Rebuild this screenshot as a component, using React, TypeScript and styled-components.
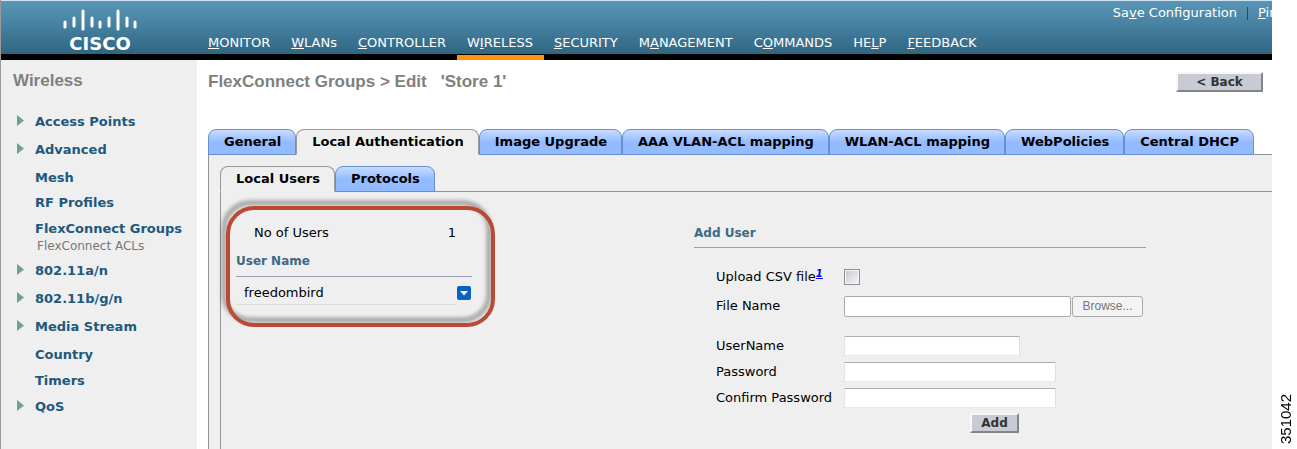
import React, { useState } from "react";
import styled, { createGlobalStyle, css } from "styled-components";

const sans = `"DejaVu Sans", Verdana, sans-serif`;
const arial = `"Liberation Sans", Arial, sans-serif`;

const GlobalStyle = createGlobalStyle`
  *, *::before, *::after { box-sizing: border-box; }
  body { margin: 0; background: #fff; color: #000; font: 13px/16px ${sans}; }
  button, input { font: inherit; }
`;

const Page = styled.div`
  display: flex;
  min-height: 100vh;
`;

const AppFrame = styled.div`
  flex: 1;
  min-width: 0;
  display: flex;
  flex-direction: column;
  border-left: 1px solid #999;
`;

const FigureNumber = styled.aside`
  width: 25px;
  padding: 5px;
  font: 15px/18px ${arial};
  writing-mode: vertical-rl;
  transform: rotate(180deg);
`;

/* ---------- Header ---------- */

const Header = styled.header`
  display: flex;
  height: 60px;
  border-top: 1px solid #cfe3f2;
  background: linear-gradient(#5a95b5, #4d89a9 30%, #2f6682) top / 100% 53px no-repeat #000;
`;

const Logo = styled.svg`
  flex: none;
  width: 207px;
  height: 53px;
`;

const HeaderBody = styled.div`
  flex: 1;
  min-width: 0;
  display: flex;
  flex-direction: column;
  justify-content: space-between;
`;

const UtilityNav = styled.nav`
  display: flex;
  justify-content: flex-end;
  padding-top: 4px;
`;

const UtilityLink = styled.a<{ $clipped?: boolean }>`
  color: #fff;
  text-decoration: none;
  ${(p) => p.$clipped && css`
    width: 14px;
    overflow: hidden;
  `}
`;

const Divider = styled.span`
  width: 1px;
  height: 13px;
  margin: 2px 10px 0;
  background: #1f4a7a;
`;

const MainNav = styled.nav`
  display: flex;
  margin-left: -10px;
`;

const NavLink = styled.a<{ $active?: boolean }>`
  height: 25px;
  padding: 0 11px 0 10px;
  border-bottom: 5px solid ${(p) => (p.$active ? "#ff9310" : "transparent")};
  color: #fff;
  text-decoration: none;
`;

/* ---------- Sidebar ---------- */

const Columns = styled.div`
  flex: 1;
  display: flex;
`;

const Sidebar = styled.aside`
  flex: none;
  width: 196px;
  padding: 11px 12px;
  background: #efefef;
`;

const Heading = styled.h1`
  margin: 0;
  color: #808080;
  font: bold 17px/20px ${arial};
  white-space: pre;
`;

const SideList = styled.ul`
  margin: 22px 0 0;
  padding: 0;
  list-style: none;
`;

const SideItem = styled.li<{ $height: number }>`
  display: flex;
  height: ${(p) => p.$height}px;
`;

const Marker = styled.span`
  flex: none;
  width: 22px;
  padding: 2px 4px;
`;

const Triangle = styled.svg`
  display: block;
  width: 7px;
  height: 11px;
  fill: #6ba09b;
`;

const SideLink = styled.a<{ $sub?: boolean }>`
  color: #20597d;
  font-weight: bold;
  line-height: 18px;
  text-decoration: none;
  white-space: nowrap;
  ${(p) => p.$sub && css`
    padding-left: 2px;
    color: #777;
    font-size: 12px;
    font-weight: normal;
    line-height: 16px;
  `}
`;

/* ---------- Main ---------- */

const Main = styled.main`
  flex: 1;
  min-width: 0;
  display: flex;
  flex-direction: column;
  padding-left: 11px;
`;

const TitleBar = styled.div`
  display: flex;
  justify-content: space-between;
  height: 69px;
  padding: 12px 9px 0 0;
`;

const TitleText = styled.div`
  display: flex;
  gap: 14px;
`;

const GreyButton = styled.button<{ $width: number }>`
  width: ${(p) => p.$width}px;
  height: 20px;
  padding: 0;
  border: 2px solid;
  border-color: #f8f8f8 #858588 #858588 #f8f8f8;
  background: #c8cbd4;
  color: #333;
  font-size: 12px;
  font-weight: bold;
  line-height: 16px;
`;

const TabList = styled.div`
  display: flex;
  margin-bottom: -1px;
`;

const Tab = styled.button<{ $active?: boolean }>`
  position: relative;
  height: 26px;
  padding: 0 14px 0 15px;
  border: 1px solid #6890cc;
  border-radius: 8px 8px 0 0;
  background: linear-gradient(#c6dbff, #a5c6ff 35%, #93bbff 50%, #93bbff);
  font-weight: bold;
  white-space: nowrap;
  ${(p) => p.$active && css`
    border-color: #999;
    border-bottom-color: #efefef;
    background: #efefef;
  `}
`;

const Panel = styled.div`
  flex: 1;
  display: flex;
  flex-direction: column;
  padding: 11px 0 0 11px;
  border: 1px solid #8f9496;
  border-width: 1px 0 0 1px;
  background: #efefef;
`;

const InnerPanel = styled.div`
  flex: 1;
  display: grid;
  grid-template-columns: 458fr 578fr;
  align-items: start;
  padding: 33px 0 15px 15px;
  border: 1px solid #8f9496;
  border-width: 1px 0 0 1px;
`;

const Users = styled.section`
  position: relative;
  width: 236px;
`;

const Callout = styled.div`
  position: absolute;
  inset: -19px -23px -22px -10px;
  border: 4px solid #b94a35;
  border-radius: 28px;
  filter: drop-shadow(-4px -5px 2px rgba(0, 0, 0, 0.4));
  pointer-events: none;
`;

const CountRow = styled.div`
  display: flex;
  justify-content: space-between;
  padding: 0 16px 0 18px;
`;

const UserTable = styled.table`
  width: 100%;
  margin-top: 12px;
  border-collapse: collapse;
`;

const UserHead = styled.th`
  height: 23px;
  padding: 0 0 6px;
  border-bottom: 1px solid #9a9db5;
  color: #3b6a85;
  font-size: 12px;
  text-align: left;
`;

const UserCell = styled.td`
  height: 28px;
  padding: 6px 0 0 8px;
  border-bottom: 1px solid #ddd;
`;

const MenuCell = styled.td`
  width: 15px;
  padding: 6px 0 0;
`;

const MenuButton = styled.button`
  display: block;
  width: 14px;
  height: 14px;
  padding: 0;
  border: 0;
  border-radius: 2px;
  background: #0a63c4;
`;

const AddForm = styled.form`
  width: 452px;
`;

const FormTitle = styled.h2`
  margin: 0;
  height: 23px;
  border-bottom: 1px solid #9a9db5;
  color: #3b6a85;
  font-size: 12px;
  line-height: 16px;
`;

const Field = styled.div<{ $gap?: number }>`
  display: flex;
  align-items: center;
  height: 22px;
  margin-top: ${(p) => p.$gap ?? 4}px;
  padding-left: 22px;
`;

const Label = styled.label`
  flex: none;
  width: 128px;
  white-space: nowrap;
`;

const Footnote = styled.a`
  color: #00f;
  font-size: 10px;
  font-style: italic;
  font-weight: bold;
  line-height: 8px;
  vertical-align: 4px;
`;

const Checkbox = styled.input`
  appearance: none;
  width: 16px;
  height: 16px;
  margin: 0;
  border: 1px solid #8e8f8f;
  outline: 1px solid #f4f4f4;
  outline-offset: -2px;
  background: linear-gradient(135deg, #c4c9d0, #f6f6f6);
`;

const TextInput = styled.input<{ $width: number }>`
  width: ${(p) => p.$width}px;
  height: 20px;
  padding: 0 4px;
  border: 1px solid;
  border-color: #abadb3 #dbdfe6 #e3e9ef #e2e3ea;
  border-radius: 1px;
  background: #fff;
`;

const FileInput = styled(TextInput)`
  height: 21px;
  border-color: #aaa;
  border-radius: 2px;
`;

const BrowseButton = styled.button`
  width: 71px;
  height: 21px;
  margin-left: 1px;
  padding: 0;
  border: 1px solid #aaa;
  border-radius: 3px;
  background: #f4f4f4;
  color: #777;
  font: 12px/18px ${arial};
`;

const Actions = styled.div`
  margin-top: 4px;
  padding-left: 276px;
`;

/* Puts the underline under the access-key letter. */
const Access = ({ text, at = 0 }: { text: string; at?: number }) => (
  <>
    {text.slice(0, at)}
    <u>{text[at]}</u>
    {text.slice(at + 1)}
  </>
);

const bars = [
  [64, 20, 27], [73, 16, 26], [82, 9, 29], [91, 16, 26], [99, 20, 27],
  [108, 16, 26], [117, 9, 29], [126, 16, 26], [134, 20, 27],
];

const navItems = [
  { text: "MONITOR" }, { text: "WLANs" }, { text: "CONTROLLER" },
  { text: "WIRELESS", at: 1, active: true }, { text: "SECURITY" },
  { text: "MANAGEMENT", at: 1 }, { text: "COMMANDS", at: 1 },
  { text: "HELP", at: 2 }, { text: "FEEDBACK" },
];

const sideItems = [
  { text: "Access Points", height: 28, arrow: true },
  { text: "Advanced", height: 28, arrow: true },
  { text: "Mesh", height: 25 },
  { text: "RF Profiles", height: 26 },
  { text: "FlexConnect Groups", height: 18 },
  { text: "FlexConnect ACLs", height: 24, sub: true },
  { text: "802.11a/n", height: 28, arrow: true },
  { text: "802.11b/g/n", height: 28, arrow: true },
  { text: "Media Stream", height: 28, arrow: true },
  { text: "Country", height: 26 },
  { text: "Timers", height: 26 },
  { text: "QoS", height: 26, arrow: true },
];

const tabs = [
  "General", "Local Authentication", "Image Upgrade", "AAA VLAN-ACL mapping",
  "WLAN-ACL mapping", "WebPolicies", "Central DHCP",
];

const Tabs = ({ items, initial }: { items: string[]; initial: string }) => {
  const [current, setCurrent] = useState(initial);
  return (
    <TabList role="tablist">
      {items.map((t) => (
        <Tab key={t} type="button" role="tab" aria-selected={t === current}
          $active={t === current} onClick={() => setCurrent(t)}>
          {t}
        </Tab>
      ))}
    </TabList>
  );
};

export default function App() {
  return (
    <Page>
      <GlobalStyle />
      <AppFrame>
        <Header>
          <Logo viewBox="0 0 207 53" role="img" aria-label="Cisco">
            {bars.map(([x, y1, y2]) => (
              <line key={x} x1={x} x2={x} y1={y1 + 1} y2={y2 - 1}
                stroke="#fff" strokeWidth="3" strokeLinecap="round" />
            ))}
            <text x="99" y="49" textAnchor="middle" fill="#fff" fontFamily="DejaVu Sans, sans-serif"
              fontWeight="bold" fontSize="18">CISCO</text>
          </Logo>
          <HeaderBody>
            <UtilityNav>
              <UtilityLink href="#save"><Access text="Save Configuration" at={2} /></UtilityLink>
              <Divider />
              <UtilityLink href="#ping" $clipped><Access text="Ping" /></UtilityLink>
            </UtilityNav>
            <MainNav>
              {navItems.map((n) => (
                <NavLink key={n.text} href="#nav" $active={n.active}>
                  <Access text={n.text} at={n.at} />
                </NavLink>
              ))}
            </MainNav>
          </HeaderBody>
        </Header>
        <Columns>
          <Sidebar>
            <Heading as="h2">Wireless</Heading>
            <SideList>
              {sideItems.map((s) => (
                <SideItem key={s.text} $height={s.height}>
                  <Marker>
                    {s.arrow && <Triangle viewBox="0 0 7 11"><path d="M0 0L7 5.5L0 11Z" /></Triangle>}
                  </Marker>
                  <SideLink href="#side" $sub={s.sub}>{s.text}</SideLink>
                </SideItem>
              ))}
            </SideList>
          </Sidebar>
          <Main>
            <TitleBar>
              <TitleText>
                <Heading>FlexConnect Groups &gt; Edit</Heading>
                <Heading as="span">'Store 1'</Heading>
              </TitleText>
              <GreyButton type="button" $width={87}>&lt; Back</GreyButton>
            </TitleBar>
            <Tabs items={tabs} initial="Local Authentication" />
            <Panel>
              <Tabs items={["Local Users", "Protocols"]} initial="Local Users" />
              <InnerPanel>
                <Users>
                  <CountRow><span>No of Users</span><span>1</span></CountRow>
                  <UserTable>
                    <thead>
                      <tr><UserHead colSpan={2}>User Name</UserHead></tr>
                    </thead>
                    <tbody>
                      <tr>
                        <UserCell>freedombird</UserCell>
                        <MenuCell>
                          <MenuButton type="button" aria-label="User actions">
                            <svg width="14" height="14" viewBox="0 0 14 14" display="block">
                              <path d="M3 5H11L7 9.500Z" fill="#fff" />
                            </svg>
                          </MenuButton>
                        </MenuCell>
                      </tr>
                    </tbody>
                  </UserTable>
                  <Callout />
                </Users>
                <AddForm onSubmit={(e) => e.preventDefault()}>
                  <FormTitle>Add User</FormTitle>
                  <Field $gap={18}>
                    <Label htmlFor="csv">Upload CSV file<Footnote href="#note1">1</Footnote></Label>
                    <Checkbox id="csv" type="checkbox" />
                  </Field>
                  <Field $gap={7}>
                    <Label htmlFor="file">File Name</Label>
                    <FileInput id="file" type="text" $width={227} />
                    <BrowseButton type="button" disabled>Browse...</BrowseButton>
                  </Field>
                  <Field $gap={18}>
                    <Label htmlFor="user">UserName</Label>
                    <TextInput id="user" type="text" $width={176} />
                  </Field>
                  <Field>
                    <Label htmlFor="pass">Password</Label>
                    <TextInput id="pass" type="password" $width={212} />
                  </Field>
                  <Field>
                    <Label htmlFor="confirm">Confirm Password</Label>
                    <TextInput id="confirm" type="password" $width={212} />
                  </Field>
                  <Actions>
                    <GreyButton type="submit" $width={49}>Add</GreyButton>
                  </Actions>
                </AddForm>
              </InnerPanel>
            </Panel>
          </Main>
        </Columns>
      </AppFrame>
      <FigureNumber>351042</FigureNumber>
    </Page>
  );
}
